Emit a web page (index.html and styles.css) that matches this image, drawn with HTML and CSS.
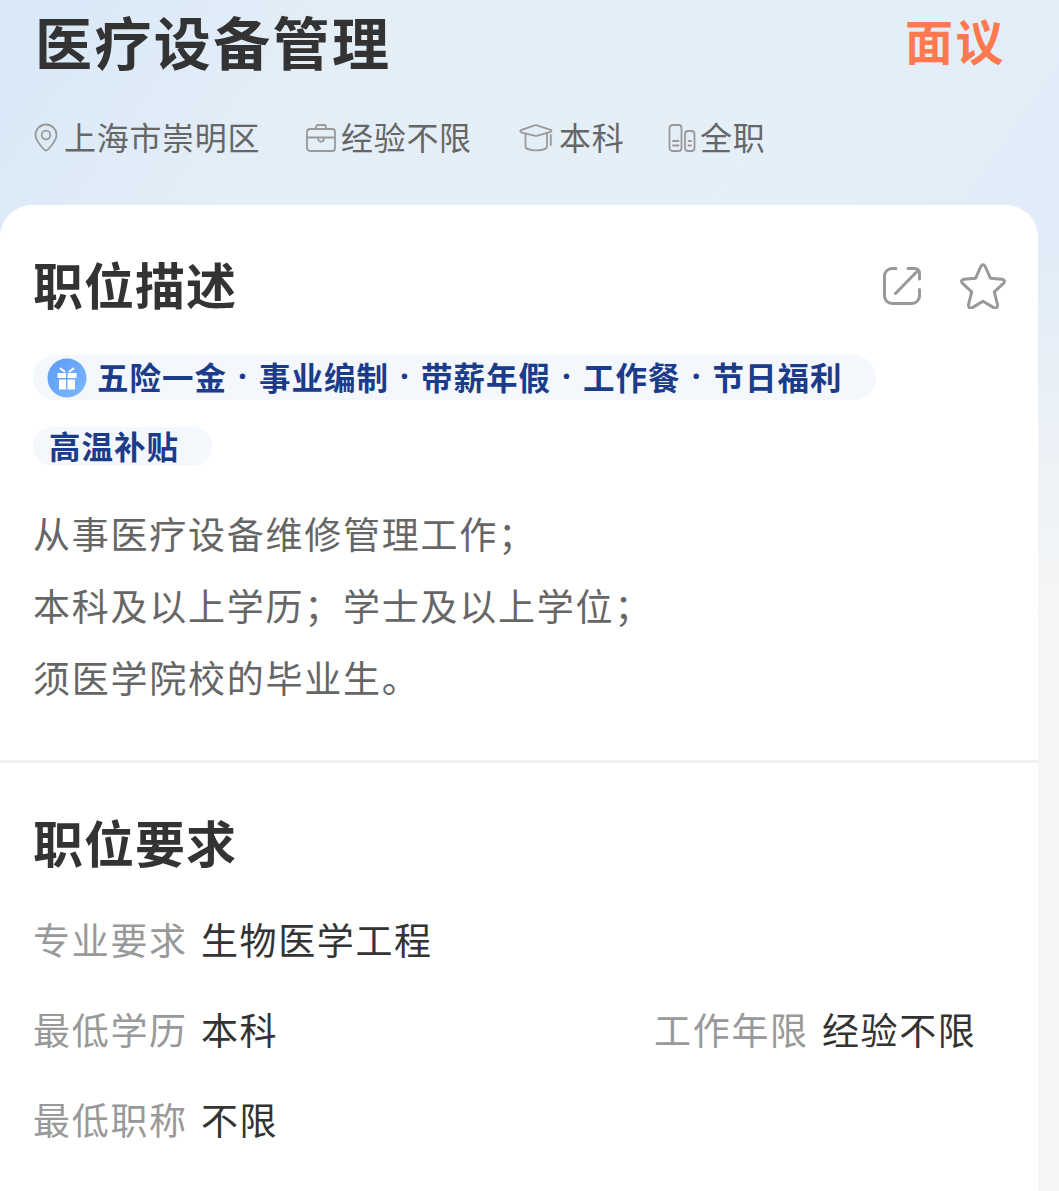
FILE: index.html
```html
<!DOCTYPE html>
<html lang="zh-CN">
<head>
    <meta charset="UTF-8">
    <meta name="viewport" content="width=device-width, initial-scale=1.0">
    <title>医疗设备管理</title>
    <link rel="stylesheet" href="styles.css">
</head>
<body>
    <header class="job-header">
        <div class="title-row">
            <h1>医疗设备管理</h1>
            <span class="salary">面议</span>
        </div>
        <ul class="job-meta">
            <li class="place">
                <svg width="24" height="30" viewBox="0 0 24 30">
                    <path d="M12 27.5C10.5 27.5 1.5 18 1.5 11.8a10.5 10.3 0 0 1 21 0C22.500 18 13.500 27.500 12 27.500z"/>
                    <circle cx="12" cy="12" r="4.300"/>
                </svg>
                <span>上海市崇明区</span>
            </li>
            <li class="exp">
                <svg width="30" height="30" viewBox="0 0 30 30">
                    <rect x="1" y="6" width="28" height="22" rx="3"/>
                    <path d="M10 6V4a2 2 0 0 1 2-2h6a2 2 0 0 1 2 2v2M1 14.500h28M12.300 14.500v1.500a2.700 2.700 0 0 0 5.400 0v-1.500"/>
                </svg>
                <span>经验不限</span>
            </li>
            <li class="degree">
                <svg width="34" height="30" viewBox="0 0 34 30">
                    <path d="M2 7.200L15.500 2.400a4 4 0 0 1 2.600 0L31.600 6.800c1.200.5 1.200 1.500 0 2L18.500 12.600a5 5 0 0 1-3 0L2.200 9.400c-1.200-.5-1.200-1.700-.2-2.200z"/>
                    <path d="M6.500 11v12.500c0 5.200 21.500 5.200 21.500 0V10.500M31.800 12v10"/>
                </svg>
                <span>本科</span>
            </li>
            <li class="type">
                <svg width="28" height="30" viewBox="0 0 28 30">
                    <rect x="1.500" y="2" width="12" height="26" rx="3"/>
                    <rect x="17" y="8" width="9.500" height="20" rx="3"/>
                    <path d="M5 18h5.500M5 22.500h5.500M20.500 18h2.500M20.500 22.500h2.500"/>
                </svg>
                <span>全职</span>
            </li>
        </ul>
    </header>

    <main class="card">
        <section class="description">
            <div class="section-head">
                <h2>职位描述</h2>
                <div class="actions">
                    <svg width="40" height="40" viewBox="0 0 40 40">
                        <path d="M14 2.500H10A7.500 7.500 0 0 0 2.500 10v20a7.500 7.500 0 0 0 7.500 7.500h20a7.500 7.500 0 0 0 7.500-7.500V23.500M26 2.500h7a4.500 4.500 0 0 1 4.500 4.500v6M13.500 27.500L36 4.500"/>
                    </svg>
                    <svg width="46" height="46" viewBox="0 0 46 46">
                        <path d="M20.800 3.500Q23 0.200 25.200 3.500L30.400 15.200L42 16.200Q46 17.200 43.500 20.400L34.300 28.800L37.600 42Q37.500 46 33.600 44.600L23 38.300L12.400 44.600Q8.500 46 8.400 42L11.700 28.800L2.500 20.400Q0 17.200 4 16.200L15.600 15.200Z"/>
                    </svg>
                </div>
            </div>
            <div class="benefits">
                <svg class="gift" width="40" height="40" viewBox="0 0 40 40">
                    <defs>
                        <linearGradient id="giftBg" x1="0" y1="0" x2="1" y2="1">
                            <stop offset="0" stop-color="#5b9bf5"/>
                            <stop offset="1" stop-color="#7db8ff"/>
                        </linearGradient>
                    </defs>
                    <circle cx="20" cy="20" r="19.500" fill="url(#giftBg)"/>
                    <path class="box" d="M10.500 15h8.500v5h-8.500zM20.500 15h9v5h-9zM12 21.500h7v10h-7zM20.500 21.500h7.500v10h-7.500z"/>
                    <path class="bow" d="M13.500 10.500l4 3M26.500 10.500l-4 3"/>
                </svg>
                <span>五险一金</span><i>·</i><span>事业编制</span><i>·</i><span>带薪年假</span><i>·</i><span>工作餐</span><i>·</i><span>节日福利</span>
            </div>
            <div class="benefits extra"><span>高温补贴</span></div>
            <p>从事医疗设备维修管理工作；<br>本科及以上学历；学士及以上学位；<br>须医学院校的毕业生。</p>
        </section>

        <section class="requirements">
            <h2>职位要求</h2>
            <dl>
                <div class="item wide"><dt>专业要求</dt><dd>生物医学工程</dd></div>
                <div class="item"><dt>最低学历</dt><dd>本科</dd></div>
                <div class="item"><dt>工作年限</dt><dd>经验不限</dd></div>
                <div class="item"><dt>最低职称</dt><dd>不限</dd></div>
            </dl>
        </section>
    </main>
</body>
</html>
```
FILE: styles.css
```css
* {
    box-sizing: border-box;
}

body {
    margin: 0;
    height: 1191px;
    overflow: hidden;
    font-family: "Noto Sans CJK SC", sans-serif;
    color: #333;
    background:
        linear-gradient(180deg, rgba(246, 246, 246, 0) 230px, #f6f6f6 620px),
        linear-gradient(125deg, #d8e8f8 0, #e4eef7 300px, #e5eff8 700px, #e0ecf8 1000px);
}

h1, h2, p, ul, dl, dd {
    margin: 0;
    padding: 0;
}

svg {
    flex: none;
    fill: none;
    stroke: #999;
    stroke-width: 1.8;
    stroke-linecap: round;
    stroke-linejoin: round;
}

.job-header {
    height: 205px;
    padding: 0 53px 0 35px;
}

.title-row {
    display: flex;
    justify-content: space-between;
    height: 80px;
    line-height: 80px;
}

h1 {
    font-size: 57px;
    font-weight: 700;
    letter-spacing: 2.4px;
}

.salary {
    margin-top: -1px;
    color: #ff7950;
    font-size: 48px;
    font-weight: 700;
    letter-spacing: 2.5px;
}

.job-meta {
    display: flex;
    margin-top: 34px;
    height: 48px;
    line-height: 44px;
    list-style: none;
    font-size: 32px;
    letter-spacing: 0.7px;
    color: #666;
}

.job-meta li {
    display: flex;
    align-items: center;
}

.job-meta span {
    height: 48px;
}

.place {
    width: 270px;
    gap: 6px;
    margin-left: -1px;
}

.exp {
    width: 213px;
    gap: 5px;
    margin-left: 2px;
}

.degree {
    width: 149px;
    gap: 6px;
}

.type {
    gap: 4px;
}

.card {
    width: 1038px;
    height: 986px;
    background: #fff;
    border-radius: 32px 32px 0 0;
}

.description {
    height: 558px;
    padding: 38px 33px 0 33px;
    border-bottom: 3px solid #efefef;
}

.section-head {
    display: flex;
    justify-content: space-between;
    height: 80px;
}

h2 {
    font-size: 50px;
    font-weight: 700;
    line-height: 80px;
    letter-spacing: 1px;
}

.actions {
    display: flex;
    align-items: center;
    gap: 38px;
    padding-top: 5px;
    margin-right: -1px;
}

.actions svg {
    stroke-width: 3;
}

.benefits {
    display: flex;
    align-items: center;
    width: 843px;
    height: 45px;
    margin-top: 32px;
    padding-left: 14px;
    border-radius: 23px;
    background: #f4f7fb;
    color: #1b3b8b;
    font-size: 31.500px;
    font-weight: 700;
    line-height: 40px;
    letter-spacing: 1px;
    white-space: nowrap;
}

.benefits span {
    height: 44px;
}

.benefits i {
    width: 32px;
    height: 44px;
    font-family: "Noto Sans", sans-serif;
    font-style: normal;
    text-align: center;
}

.gift {
    margin-right: 10px;
    stroke: none;
}

.gift .box {
    fill: #fff;
}

.gift .bow {
    stroke: #fff;
    stroke-width: 2;
}

.extra {
    width: 179px;
    height: 39px;
    margin-top: 27px;
    padding-left: 16px;
}

.description p {
    margin-top: 31px;
    font-size: 37px;
    line-height: 72px;
    letter-spacing: 1.750px;
    color: #666;
}

.requirements {
    padding: 38px 34px 0 33px;
}

dl {
    display: grid;
    grid-template-columns: 621px 1fr;
    margin-top: 13px;
    font-size: 37px;
    line-height: 90px;
}

.item {
    display: flex;
}

.wide {
    grid-column: 1 / 3;
}

dt {
    width: 168px;
    flex: none;
    color: #999;
    letter-spacing: 1.700px;
}

dd {
    letter-spacing: 1.600px;
}
```
